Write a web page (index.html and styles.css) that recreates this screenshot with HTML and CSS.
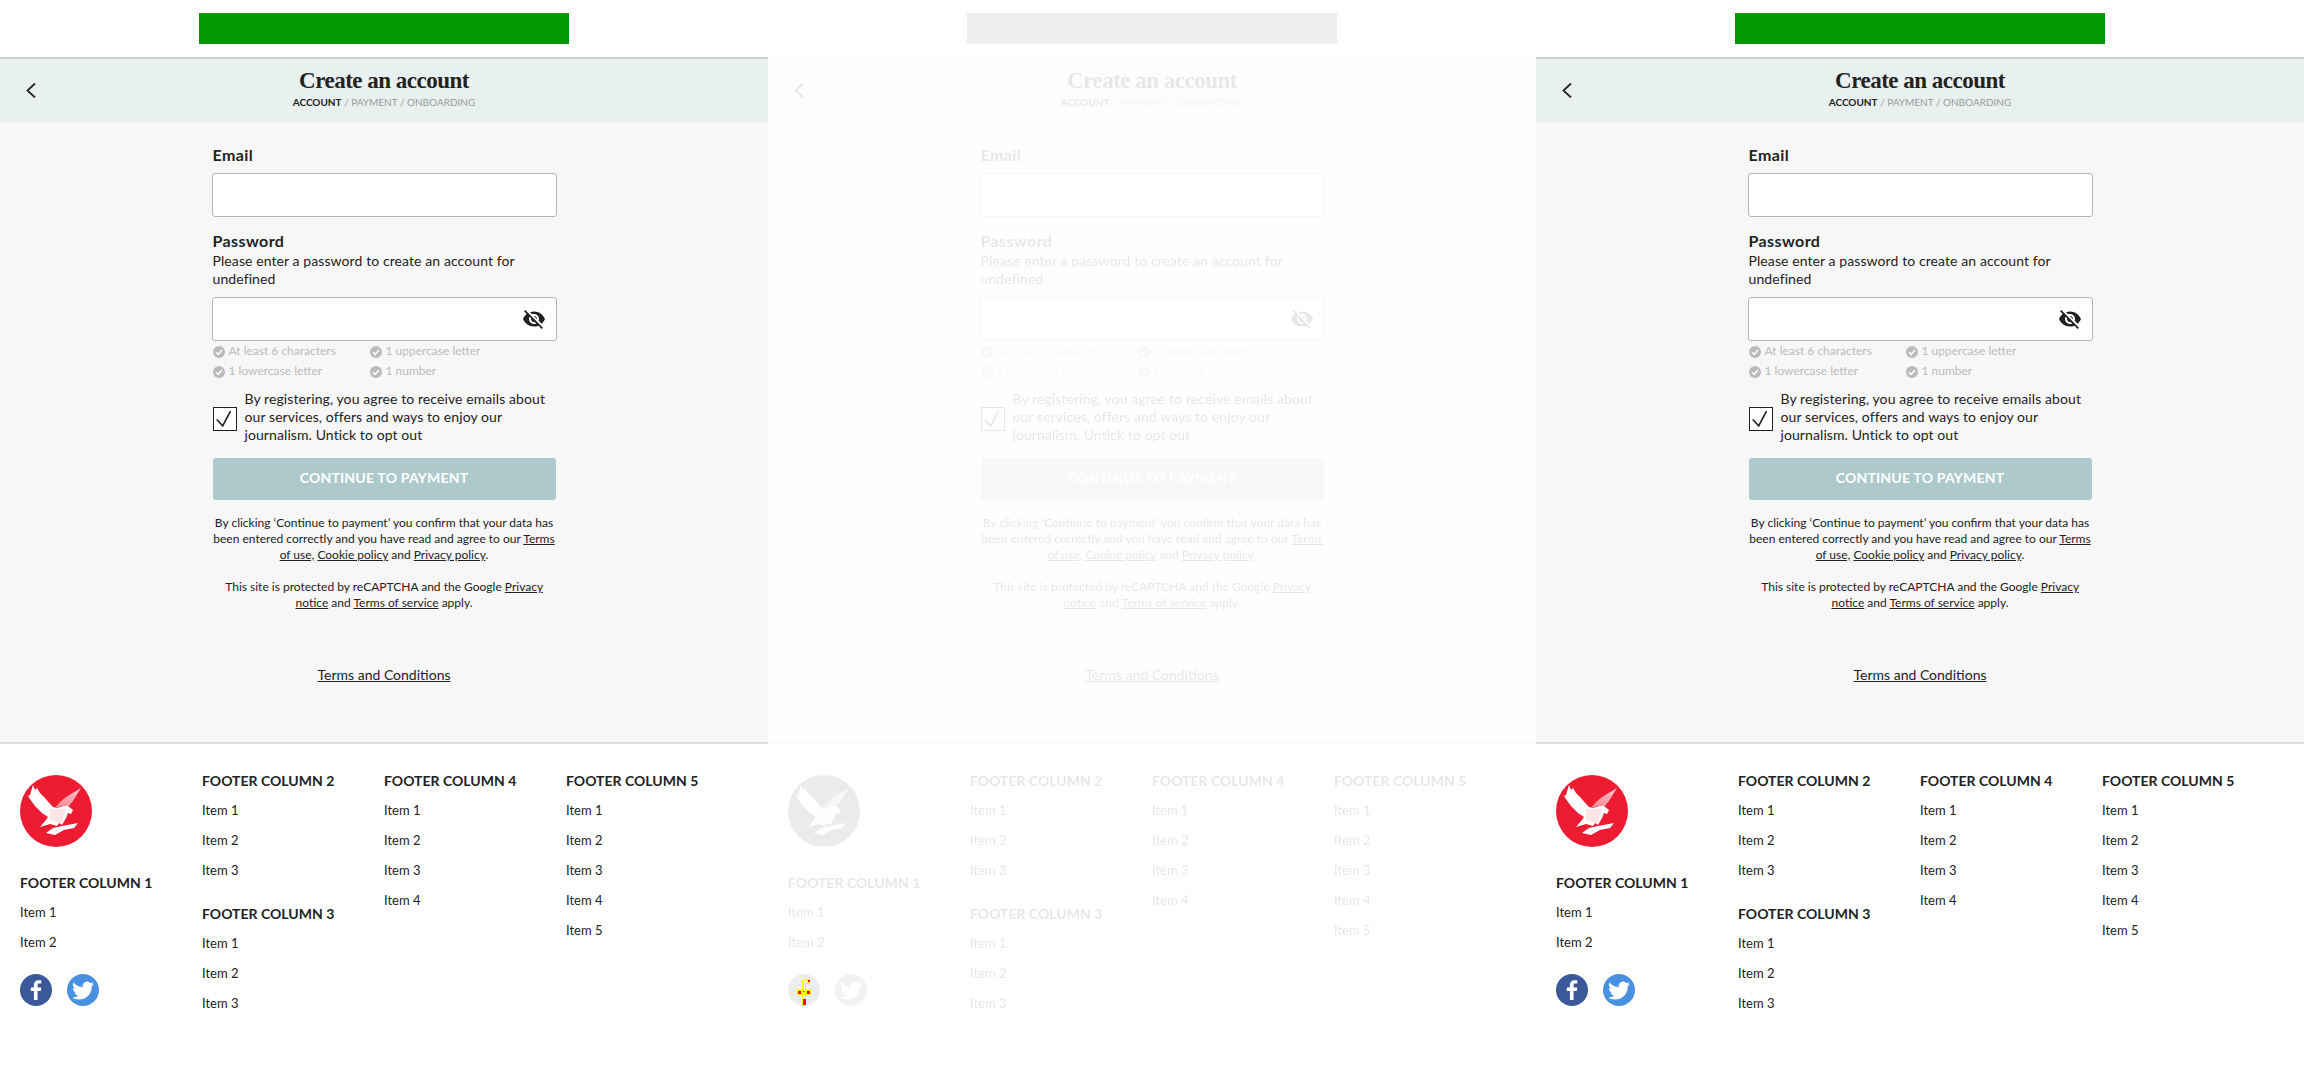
FILE: index.html
```html
<!DOCTYPE html>
<html>
<head>
<meta charset="utf-8">
<title>Create an account</title>
<link rel="stylesheet" href="styles.css">
</head>
<body>

<svg class="defs" width="0" height="0" aria-hidden="true">
  <defs>
    <linearGradient id="wing-fade" x1="1" y1="0" x2="0" y2="1">
      <stop offset="0" stop-color="#fff" stop-opacity="0.75"/>
      <stop offset="1" stop-color="#fff" stop-opacity="0.45"/>
    </linearGradient>
    <pattern id="feather-dots" width="2" height="2" patternUnits="userSpaceOnUse">
      <circle cx="1" cy="1" r="0.42" fill="#ed1c33"/>
    </pattern>
    <symbol id="logo" viewBox="0 0 72 72">
      <circle cx="36" cy="36" r="36" fill="#ed1c33"/>
      <path fill="#fff" d="M13 10 L15 15 L17 13 L20 18 L23 21 L33 32 L37 33 L44 31 L48 31 L53 35 L51 39 L48 38 L46 43 L42 50 L39 48 L37 51 L30 49 L20 52 L26 45 L28 42 L22 38 L15 31 L12 27 L8 21 L10 20 Z"/>
      <path fill="url(#wing-fade)" d="M35 33 L40 27 L46 22 L61 13 L56 21 L53 26 L49 31 L43 31 Z"/>
      <path fill="#fff" d="M26 58 L33 53 L42 51 L58 48 L54 53 L44 55 L35 60 Z"/>
      <path fill="url(#feather-dots)" d="M30 34 L46 34 L42 48 L30 46 Z"/>
    </symbol>
    <symbol id="eye-off" viewBox="0 0 24 24">
      <path d="M12 7c2.76 0 5 2.24 5 5 0 .65-.13 1.26-.36 1.83l2.92 2.92c1.51-1.26 2.7-2.89 3.43-4.75-1.73-4.39-6-7.5-11-7.5-1.4 0-2.74.25-3.98.7l2.16 2.16C10.74 7.13 11.35 7 12 7zM2 4.27l2.28 2.28.46.46C3.08 8.3 1.78 10.02 1 12c1.73 4.39 6 7.5 11 7.5 1.55 0 3.03-.3 4.38-.84l.42.42L19.73 22 21 20.73 3.27 3 2 4.27zM7.53 9.8l1.55 1.55c-.05.21-.08.43-.08.65 0 1.66 1.34 3 3 3 .22 0 .44-.03.65-.08l1.55 1.55c-.67.33-1.41.53-2.2.53-2.76 0-5-2.24-5-5 0-.79.2-1.53.53-2.2zm4.31-.78l3.15 3.15.02-.16c0-1.66-1.34-3-3-3l-.17.01z"/>
    </symbol>
    <symbol id="tick" viewBox="0 0 12 12">
      <circle cx="6" cy="6" r="6" fill="#bbb"/>
      <path d="M3 6.2 L5.2 8.3 L9 4" fill="none" stroke="#fff" stroke-width="1.5"/>
    </symbol>
    <symbol id="fb" viewBox="0 0 32 32">
      <circle cx="16" cy="16" r="16" fill="#3b5998"/>
      <path fill="#fff" d="M17.6 26V17h3.2l.5-3.6h-3.7v-2.2c0-1 .3-1.7 1.8-1.7h1.9V6.3c-.4 0-1.500-.1-2.800-.1-2.800 0-4.600 1.700-4.600 4.700v2.500H10.700V17h3.200v9z"/>
    </symbol>
    <symbol id="tw" viewBox="0 0 32 32">
      <circle cx="16" cy="16" r="16" fill="#4a90e2"/>
      <g transform="translate(5 5.500) scale(.92)">
        <path fill="#fff" d="M23.953 4.570a10 10 0 01-2.825.775 4.958 4.958 0 002.163-2.723c-.951.555-2.005.959-3.127 1.184a4.920 4.920 0 00-8.384 4.482C7.690 8.095 4.067 6.130 1.640 3.162a4.822 4.822 0 00-.666 2.475c0 1.710.870 3.213 2.188 4.096a4.904 4.904 0 01-2.228-.616v.060a4.923 4.923 0 003.946 4.827 4.996 4.996 0 01-2.212.085 4.936 4.936 0 004.604 3.417 9.867 9.867 0 01-6.102 2.105c-.390 0-.779-.023-1.170-.067a13.995 13.995 0 007.557 2.209c9.053 0 13.998-7.496 13.998-13.985 0-.210 0-.420-.015-.630A9.935 9.935 0 0024 4.590z"/>
      </g>
    </symbol>
  </defs>
</svg>

<div class="page">

  <!-- panel 1 -->
  <section class="panel">
    <div class="panel-body">
      <div class="banner"><div class="banner-slot"></div></div>
      <header class="head">
        <svg class="back" viewBox="0 0 10 15"><path d="M9 .5 L1.500 7.500 L9 14.500" fill="none" stroke="#222" stroke-width="1.800"/></svg>
        <div class="head-text">
          <h1>Create an account</h1>
          <div class="crumbs"><b>ACCOUNT</b> / PAYMENT / ONBOARDING</div>
        </div>
      </header>
      <main class="main">
        <form class="form">
          <label class="label">Email</label>
          <div class="input"></div>
          <label class="label label-pw">Password</label>
          <p class="pw-hint">Please enter a password to create an account for undefined</p>
          <div class="input input-pw"><svg class="eye"><use href="#eye-off"/></svg></div>
          <ul class="rules">
            <li><svg class="tick"><use href="#tick"/></svg>At least 6 characters</li>
            <li><svg class="tick"><use href="#tick"/></svg>1 uppercase letter</li>
            <li><svg class="tick"><use href="#tick"/></svg>1 lowercase letter</li>
            <li><svg class="tick"><use href="#tick"/></svg>1 number</li>
          </ul>
          <div class="consent">
            <span class="checkbox"><svg viewBox="0 0 24 24"><path d="M3 12.500 L9.500 19.500 L18 3.500" fill="none" stroke="#222" stroke-width="1.800"/></svg></span>
            <p>By registering, you agree to receive emails about our services, offers and ways to enjoy our journalism. Untick to opt out</p>
          </div>
          <button class="submit" type="button">CONTINUE TO PAYMENT</button>
          <p class="legal">By clicking ‘Continue to payment’ you confirm that your data has been entered correctly and you have read and agree to our <a>Terms</a> <a>of use,</a> <a>Cookie policy</a> and <a>Privacy policy</a>.</p>
          <p class="legal legal-next">This site is protected by reCAPTCHA and the Google <a>Privacy</a> <a>notice</a> and <a>Terms of service</a> apply.</p>
          <a class="terms">Terms and Conditions</a>
        </form>
      </main>
      <footer class="foot">
        <div class="foot-col">
          <svg class="logo"><use href="#logo"/></svg>
          <h4>FOOTER COLUMN 1</h4>
          <ul><li>Item 1</li><li>Item 2</li></ul>
          <div class="social"><svg><use href="#fb"/></svg><svg><use href="#tw"/></svg></div>
        </div>
        <div class="foot-col">
          <h4>FOOTER COLUMN 2</h4>
          <ul><li>Item 1</li><li>Item 2</li><li>Item 3</li></ul>
          <h4 class="next-group">FOOTER COLUMN 3</h4>
          <ul><li>Item 1</li><li>Item 2</li><li>Item 3</li></ul>
        </div>
        <div class="foot-col">
          <h4>FOOTER COLUMN 4</h4>
          <ul><li>Item 1</li><li>Item 2</li><li>Item 3</li><li>Item 4</li></ul>
        </div>
        <div class="foot-col">
          <h4>FOOTER COLUMN 5</h4>
          <ul><li>Item 1</li><li>Item 2</li><li>Item 3</li><li>Item 4</li><li>Item 5</li></ul>
        </div>
      </footer>
    </div>
  </section>

  <!-- panel 2, faded -->
  <section class="panel panel-faded">
    <div class="panel-body">
      <div class="banner"><div class="banner-slot"></div></div>
      <header class="head">
        <svg class="back" viewBox="0 0 10 15"><path d="M9 .5 L1.500 7.500 L9 14.500" fill="none" stroke="#222" stroke-width="1.800"/></svg>
        <div class="head-text">
          <h1>Create an account</h1>
          <div class="crumbs"><b>ACCOUNT</b> / PAYMENT / ONBOARDING</div>
        </div>
      </header>
      <main class="main">
        <form class="form">
          <label class="label">Email</label>
          <div class="input"></div>
          <label class="label label-pw">Password</label>
          <p class="pw-hint">Please enter a password to create an account for undefined</p>
          <div class="input input-pw"><svg class="eye"><use href="#eye-off"/></svg></div>
          <ul class="rules">
            <li><svg class="tick"><use href="#tick"/></svg>At least 6 characters</li>
            <li><svg class="tick"><use href="#tick"/></svg>1 uppercase letter</li>
            <li><svg class="tick"><use href="#tick"/></svg>1 lowercase letter</li>
            <li><svg class="tick"><use href="#tick"/></svg>1 number</li>
          </ul>
          <div class="consent">
            <span class="checkbox"><svg viewBox="0 0 24 24"><path d="M3 12.500 L9.500 19.500 L18 3.500" fill="none" stroke="#222" stroke-width="1.800"/></svg></span>
            <p>By registering, you agree to receive emails about our services, offers and ways to enjoy our journalism. Untick to opt out</p>
          </div>
          <button class="submit" type="button">CONTINUE TO PAYMENT</button>
          <p class="legal">By clicking ‘Continue to payment’ you confirm that your data has been entered correctly and you have read and agree to our <a>Terms</a> <a>of use,</a> <a>Cookie policy</a> and <a>Privacy policy</a>.</p>
          <p class="legal legal-next">This site is protected by reCAPTCHA and the Google <a>Privacy</a> <a>notice</a> and <a>Terms of service</a> apply.</p>
          <a class="terms">Terms and Conditions</a>
        </form>
      </main>
      <footer class="foot">
        <div class="foot-col">
          <svg class="logo"><use href="#logo"/></svg>
          <h4>FOOTER COLUMN 1</h4>
          <ul><li>Item 1</li><li>Item 2</li></ul>
          <div class="social"><svg><use href="#fb"/></svg><svg><use href="#tw"/></svg></div>
        </div>
        <div class="foot-col">
          <h4>FOOTER COLUMN 2</h4>
          <ul><li>Item 1</li><li>Item 2</li><li>Item 3</li></ul>
          <h4 class="next-group">FOOTER COLUMN 3</h4>
          <ul><li>Item 1</li><li>Item 2</li><li>Item 3</li></ul>
        </div>
        <div class="foot-col">
          <h4>FOOTER COLUMN 4</h4>
          <ul><li>Item 1</li><li>Item 2</li><li>Item 3</li><li>Item 4</li></ul>
        </div>
        <div class="foot-col">
          <h4>FOOTER COLUMN 5</h4>
          <ul><li>Item 1</li><li>Item 2</li><li>Item 3</li><li>Item 4</li><li>Item 5</li></ul>
        </div>
      </footer>
    </div>
    <!-- sits on top of the faded facebook icon -->
    <svg class="glitch" viewBox="0 0 14 27" shape-rendering="crispEdges">
      <path fill="#ff0" d="M5 1h2V0h6v5H9v5h5v6H9v11H5V16H0v-6h5z"/>
      <path fill="#fff" d="M7 2h3v2H7zM7 5h1v6H7zM6 16h2v4H6z"/>
      <path fill="#f00" d="M11 1h2v2h-2zM1 12h3v3H1zM6 12h1v1H6zM10 12h3v3h-3zM6 20h3v6H6z"/>
    </svg>
  </section>

  <!-- panel 3 -->
  <section class="panel">
    <div class="panel-body">
      <div class="banner"><div class="banner-slot"></div></div>
      <header class="head">
        <svg class="back" viewBox="0 0 10 15"><path d="M9 .5 L1.500 7.500 L9 14.500" fill="none" stroke="#222" stroke-width="1.800"/></svg>
        <div class="head-text">
          <h1>Create an account</h1>
          <div class="crumbs"><b>ACCOUNT</b> / PAYMENT / ONBOARDING</div>
        </div>
      </header>
      <main class="main">
        <form class="form">
          <label class="label">Email</label>
          <div class="input"></div>
          <label class="label label-pw">Password</label>
          <p class="pw-hint">Please enter a password to create an account for undefined</p>
          <div class="input input-pw"><svg class="eye"><use href="#eye-off"/></svg></div>
          <ul class="rules">
            <li><svg class="tick"><use href="#tick"/></svg>At least 6 characters</li>
            <li><svg class="tick"><use href="#tick"/></svg>1 uppercase letter</li>
            <li><svg class="tick"><use href="#tick"/></svg>1 lowercase letter</li>
            <li><svg class="tick"><use href="#tick"/></svg>1 number</li>
          </ul>
          <div class="consent">
            <span class="checkbox"><svg viewBox="0 0 24 24"><path d="M3 12.500 L9.500 19.500 L18 3.500" fill="none" stroke="#222" stroke-width="1.800"/></svg></span>
            <p>By registering, you agree to receive emails about our services, offers and ways to enjoy our journalism. Untick to opt out</p>
          </div>
          <button class="submit" type="button">CONTINUE TO PAYMENT</button>
          <p class="legal">By clicking ‘Continue to payment’ you confirm that your data has been entered correctly and you have read and agree to our <a>Terms</a> <a>of use,</a> <a>Cookie policy</a> and <a>Privacy policy</a>.</p>
          <p class="legal legal-next">This site is protected by reCAPTCHA and the Google <a>Privacy</a> <a>notice</a> and <a>Terms of service</a> apply.</p>
          <a class="terms">Terms and Conditions</a>
        </form>
      </main>
      <footer class="foot">
        <div class="foot-col">
          <svg class="logo"><use href="#logo"/></svg>
          <h4>FOOTER COLUMN 1</h4>
          <ul><li>Item 1</li><li>Item 2</li></ul>
          <div class="social"><svg><use href="#fb"/></svg><svg><use href="#tw"/></svg></div>
        </div>
        <div class="foot-col">
          <h4>FOOTER COLUMN 2</h4>
          <ul><li>Item 1</li><li>Item 2</li><li>Item 3</li></ul>
          <h4 class="next-group">FOOTER COLUMN 3</h4>
          <ul><li>Item 1</li><li>Item 2</li><li>Item 3</li></ul>
        </div>
        <div class="foot-col">
          <h4>FOOTER COLUMN 4</h4>
          <ul><li>Item 1</li><li>Item 2</li><li>Item 3</li><li>Item 4</li></ul>
        </div>
        <div class="foot-col">
          <h4>FOOTER COLUMN 5</h4>
          <ul><li>Item 1</li><li>Item 2</li><li>Item 3</li><li>Item 4</li><li>Item 5</li></ul>
        </div>
      </footer>
    </div>
  </section>

</div>
</body>
</html>
```

FILE: styles.css
```css
* {
  box-sizing: border-box;
}

body {
  margin: 0;
  background: #fff;
  color: #222;
  font-family: "Lato", "Liberation Sans", sans-serif;
  overflow: hidden;
}

h1, h4, p, ul {
  margin: 0;
  padding: 0;
}

ul {
  list-style: none;
}

.defs {
  display: block;
  height: 0;
}

.page {
  display: flex;
}

.panel {
  position: relative;
  width: 768px;
  flex: none;
}

.panel-faded .panel-body {
  filter: grayscale(1) opacity(.11);
}

.glitch {
  position: absolute;
  left: 29px;
  top: 979px;
  width: 14px;
  height: 27px;
}

/* top banner */
.banner {
  display: flex;
  justify-content: center;
  padding: 13px 0;
}

.banner-slot {
  width: 370px;
  height: 31px;
  background: #009900;
}

/* page title bar */
.head {
  height: 65px;
  background: #e9f1f0;
  border-top: 2px solid #ccd2d2;
  display: grid;
  grid-template-columns: 1fr auto 1fr;
  padding: 0 26px;
}

.back {
  width: 10px;
  height: 15px;
  margin-top: 24px;
}

.head-text {
  text-align: center;
  padding-top: 10px;
}

h1 {
  font-family: "Liberation Serif", serif;
  font-size: 23px;
  line-height: 24px;
  font-weight: bold;
  letter-spacing: -.5px;
}

.crumbs {
  font-size: 10px;
  line-height: 14px;
  margin-top: 2px;
  color: #999;
}

.crumbs b {
  color: #222;
}

/* form */
.main {
  background: #f7f7f7;
  padding: 23px 0 57px;
}

.form {
  width: 345px;
  margin: 0 auto;
  display: flex;
  flex-direction: column;
}

.label {
  font-size: 16px;
  line-height: 20px;
  font-weight: bold;
  letter-spacing: .4px;
  padding-left: 1px;
}

.input {
  height: 44px;
  margin-top: 8px;
  background: #fff;
  border: 1px solid #b5b5b5;
  border-radius: 3px;
}

.label-pw {
  margin-top: 14px;
}

.pw-hint {
  font-size: 14px;
  line-height: 18px;
  letter-spacing: .09px;
  margin-top: 1px;
  padding: 0 1px;
}

.input-pw {
  margin-top: 9px;
  display: flex;
  align-items: center;
  justify-content: flex-end;
  padding-right: 10px;
}

.eye {
  width: 24px;
  height: 24px;
  fill: #222;
}

.rules {
  display: grid;
  grid-template-columns: 157px 1fr;
  padding-left: 1px;
  font-size: 12px;
  line-height: 20px;
  color: #bbb;
}

.rules li {
  display: flex;
  align-items: center;
  gap: 4px;
}

.tick {
  width: 12px;
  height: 12px;
  flex: none;
  margin-top: 2px;
}

.consent {
  display: flex;
  align-items: center;
  gap: 8px;
  margin-top: 9px;
  padding: 0 1px;
  font-size: 14px;
  line-height: 18px;
  letter-spacing: .09px;
}

.checkbox {
  width: 24px;
  height: 24px;
  flex: none;
  margin-top: 4px;
  background: #fff;
  border: 1.500px solid #222;
}

.checkbox svg {
  display: block;
  width: 100%;
  height: 100%;
}

.submit {
  height: 42px;
  margin: 14px 1px 0;
  padding: 0 0 4px;
  border: 0;
  border-radius: 3px;
  background: #adc9cb;
  color: #fff;
  font-family: inherit;
  font-size: 14px;
  letter-spacing: .2px;
  font-weight: bold;
}

.legal {
  margin-top: 15px;
  padding: 0 1px;
  font-size: 12px;
  line-height: 16px;
  text-align: center;
}

.legal-next {
  margin-top: 16px;
}

.legal a, .terms {
  text-decoration: underline;
}

.terms {
  margin-top: 54px;
  font-size: 14px;
  line-height: 20px;
  text-align: center;
}

/* footer */
.foot {
  border-top: 2px solid #ddd;
  padding: 26px 0 0 20px;
  display: grid;
  grid-template-columns: repeat(4, 182px);
  font-size: 13px;
  line-height: 20px;
}

.foot h4 {
  font-size: 14px;
  line-height: 20px;
  font-weight: bold;
  padding-top: 1px;
  margin-bottom: -1px;
}

.foot li {
  margin-top: 10px;
}

.logo {
  display: block;
  width: 72px;
  height: 72px;
  margin: 5px 0 25px;
}

.foot .next-group {
  margin-top: 23px;
}

.social {
  display: flex;
  gap: 15px;
  margin-top: 22px;
}

.social svg {
  width: 32px;
  height: 32px;
}
```
